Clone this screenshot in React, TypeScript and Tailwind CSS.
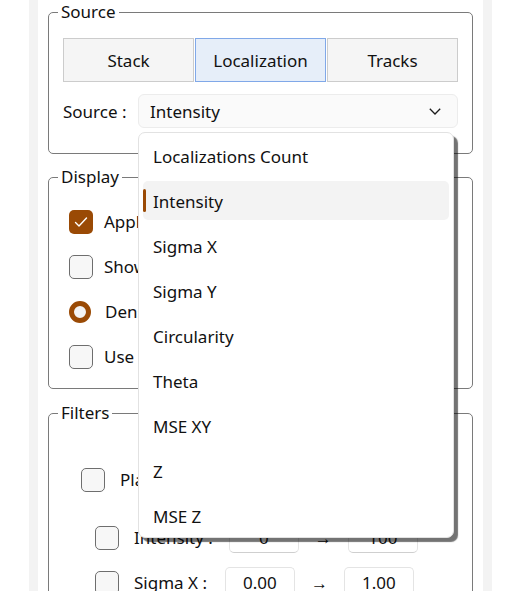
import React from "react";

const BROWN = "bg-[#9a4a05]";

function Check({ checked = false }: { checked?: boolean }) {
  if (checked) {
    return (
      <div className={`w-[24px] h-[24px] rounded-[5px] ${BROWN} flex items-center justify-center shrink-0`}>
        <svg width="14" height="12" viewBox="0 0 14 12" fill="none">
          <path d="M1.5 6.5 L5 10 L12.5 2" stroke="white" strokeWidth="1.4" strokeLinecap="round" strokeLinejoin="round" />
        </svg>
      </div>
    );
  }
  return <div className="w-[24px] h-[24px] rounded-[5px] border-[1.5px] border-[#6e6e6e] bg-[#f7f7f7] shrink-0" />;
}

function Radio() {
  return <div className="w-[22px] h-[22px] rounded-full border-[5px] border-[#9a4a05] bg-[#f3f3f3] shrink-0" />;
}

function Group({ title, className = "", children }: { title: string; className?: string; children: React.ReactNode }) {
  return (
    <fieldset className={`border-[1.5px] border-[#7a7a7a] rounded-[5px] px-[14px] ${className}`}>
      <legend className="ml-[-5px] px-[3px] leading-[18px] text-[17px] text-[#111111]">{title}</legend>
      {children}
    </fieldset>
  );
}

const items = [
  "Localizations Count",
  "Intensity",
  "Sigma X",
  "Sigma Y",
  "Circularity",
  "Theta",
  "MSE XY",
  "Z",
  "MSE Z",
];

function RangeRow({ label, a, b, gap }: { label: string; a: string; b: string; gap: string }) {
  return (
    <div className="h-[45px] flex items-center ml-[32px]">
      <Check />
      <span className={`ml-[15px] ${gap}`}>{label}</span>
      <div className="w-[70px] h-[31px] rounded-[5px] border border-[#e4e4e4] border-b-[#cfcfcf] bg-white flex items-center justify-center">{a}</div>
      <div className="w-[49px] text-center">→</div>
      <div className="w-[70px] h-[31px] rounded-[5px] border border-[#e4e4e4] border-b-[#cfcfcf] bg-white flex items-center justify-center">{b}</div>
    </div>
  );
}

export default function App() {
  return (
    <div
      className="w-[518px] h-[591px] bg-white overflow-hidden text-[17px] text-[#111111]"
      style={{ fontFamily: '"Noto Sans", "Open Sans", sans-serif' }}
    >
      <div className="ml-[29px] w-[463px] h-[591px] bg-[#f3f3f3] px-[9px]">
        <div className="h-full bg-white px-[10px] pt-[3px]">
          <Group title="Source" className="pt-[17px] pb-[25px]">
            <div className="grid grid-cols-3 gap-[1px] h-[44px]">
              <div className="border-[1.5px] border-[#cccccc] bg-[#f5f5f5] flex items-center justify-center pt-[2px]">Stack</div>
              <div className="border-[1.5px] border-[#80a8e8] bg-[#e6eef9] flex items-center justify-center pt-[2px]">Localization</div>
              <div className="border-[1.5px] border-[#cccccc] bg-[#f5f5f5] flex items-center justify-center pt-[2px]">Tracks</div>
            </div>
            <div className="mt-[12px] flex items-center">
              <span className="w-[75px] pt-[2px]">Source :</span>
              <div className="relative flex-1">
                <div className="h-[34px] rounded-[6px] bg-[#fafafa] border border-[#ececec] pl-[11px] pr-[16px] flex items-center justify-between">
                  <span className="pt-[2px]">Intensity</span>
                  <svg width="12" height="7" viewBox="0 0 12 7" fill="none">
                    <path d="M0.8 0.8 L6 6 L11.2 0.8" stroke="#1b1b1b" strokeWidth="1.3" />
                  </svg>
                </div>
                <div className="absolute left-0 top-full mt-[4px] w-[316px] h-[406px] bg-white border border-[#e2e2e2] rounded-[7px] shadow-[4px_4px_1px_rgba(0,0,0,0.55)] pt-[3px] z-10 flex flex-col gap-[6px]">
                  {items.map((it) => (
                    <div
                      key={it}
                      className={`relative mx-[4px] h-[39px] shrink-0 rounded-[5px] flex items-center pl-[10px] pt-[2px] ${it === "Intensity" ? "bg-[#f3f3f3]" : ""}`}
                    >
                      {it === "Intensity" && (
                        <div className={`absolute left-0 top-[8px] w-[3px] h-[23px] rounded-full ${BROWN}`} />
                      )}
                      {it}
                    </div>
                  ))}
                </div>
              </div>
            </div>
          </Group>

          <Group title="Display" className="mt-[14px] pt-[13px] pb-[9px]">
            <div className="h-[45px] flex items-center pl-[6px] gap-[11px]">
              <Check checked />
              <span>Apply color map</span>
            </div>
            <div className="h-[45px] flex items-center pl-[6px] gap-[11px]">
              <Check />
              <span>Show localizations</span>
            </div>
            <div className="h-[45px] flex items-center pl-[6px] gap-[14px]">
              <Radio />
              <span>Density map</span>
            </div>
            <div className="h-[45px] flex items-center pl-[6px] gap-[11px]">
              <Check />
              <span>Use color range</span>
            </div>
          </Group>

          <Group title="Filters" className="mt-[15px] pt-[35px] pb-[20px]">
            <div className="h-[45px] flex items-center ml-[18px] gap-[15px]">
              <Check />
              <span>Plane filter</span>
            </div>
            <div className="mt-[13px]">
              <RangeRow label="Intensity :" a="0" b="100" gap="mr-[16px]" />
              <RangeRow label="Sigma X :" a="0.00" b="1.00" gap="mr-[18px]" />
              <RangeRow label="Sigma Y :" a="0.00" b="1.00" gap="mr-[18px]" />
            </div>
          </Group>
        </div>
      </div>
    </div>
  );
}
